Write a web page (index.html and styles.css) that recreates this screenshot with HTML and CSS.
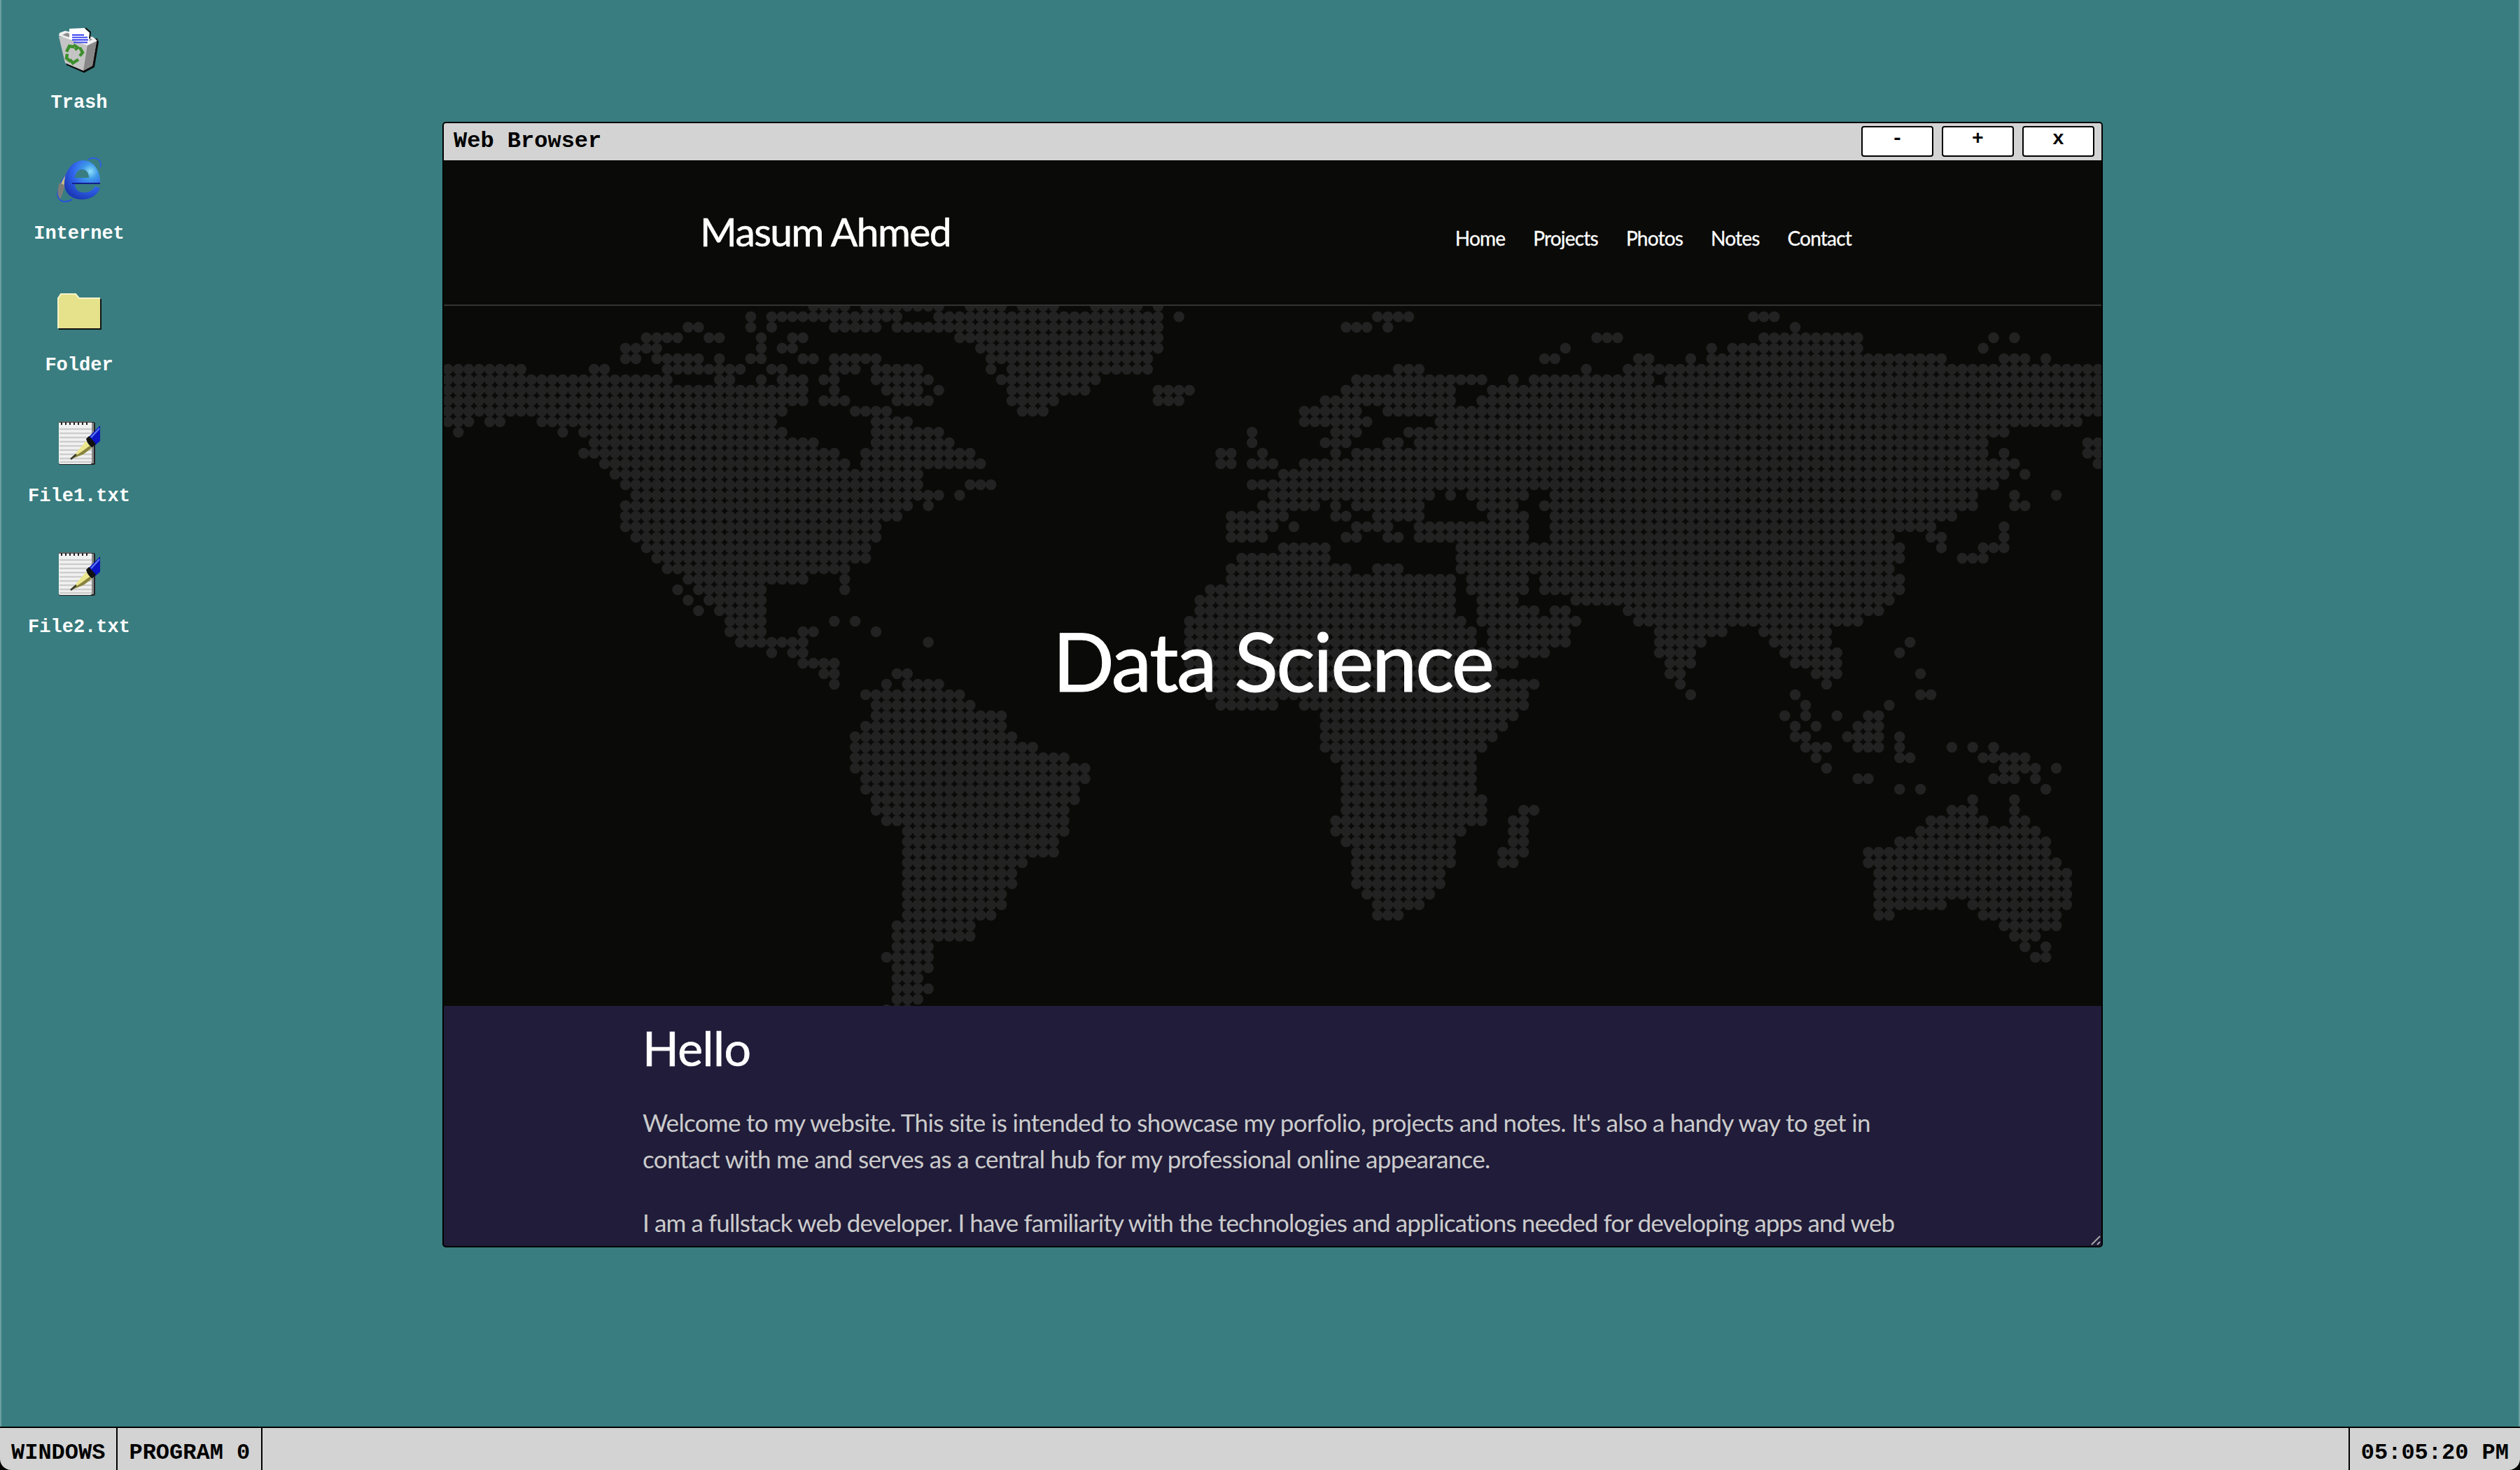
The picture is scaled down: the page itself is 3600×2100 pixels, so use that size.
FILE: index.html
```html
<!DOCTYPE html>
<html lang="en">
<head>
<meta charset="utf-8">
<title>Desktop</title>
<link rel="stylesheet" href="styles.css">
</head>
<body>
<svg class="defs" width="0" height="0" aria-hidden="true">
  <defs>
    <radialGradient id="ieGlow" gradientUnits="userSpaceOnUse" cx="48" cy="20" r="42">
      <stop offset="0" stop-color="#8fe0f8"/>
      <stop offset="0.25" stop-color="#3f9aea"/>
      <stop offset="0.6" stop-color="#2f62ea"/>
      <stop offset="1" stop-color="#1c3ab8"/>
    </radialGradient>
    <symbol id="noteIcon" viewBox="0 0 64 64">
      <path d="M50 3 H53 Q55 3 55 5 V62 Q55 64 53 64 H6 Q3 64 3 62 Z" fill="#222"/>
      <rect x="3" y="2" width="47" height="61" rx="2" fill="#f2f2f2"/>
      <rect x="50" y="4" width="3" height="58" fill="#8a8a8a"/>
      <path class="note-lines" d="M4 13H50M4 19H50M4 25H50M4 31H50M4 37H50M4 43H50M4 49H50M4 55H50M4 60H50"/>
      <path class="note-rings" d="M3 3H50"/>
      <path class="note-holes" d="M7 3v4M13 3v4M19 3v4M25 3v4M31 3v4M37 3v4M43 3v4"/>
      <path d="M46 24 L62 8 L62 30 L55 36 Z" fill="#0a14c4"/>
      <path d="M49 25 L61 12" stroke="#5f7cf0" stroke-width="2"/>
      <path d="M42 27 L46 23 L56 34 L51 39 L46 38 Z" fill="#111"/>
      <path d="M20 56 L42 30 L50 40 L38 49 Z" fill="#ece68e"/>
      <path d="M20 56 L38 49 L50 40 L47 37 L36 45 Z" fill="#8a8440"/>
      <path d="M20 56 L28 49" stroke="#3a3a2a" stroke-width="2.6"/>
    </symbol>
  </defs>
</svg>

<main class="desktop">
  <ul class="icons">
    <li class="icon">
      <svg class="glyph" viewBox="0 0 64 64">
        <path d="M4 16 L14 55 L39 66 L54 58 L60 22 L58 17 Z" fill="#0c0c0c"/>
        <path d="M3 14 L12 52 L38 63 L51 56 L57 21 Z" fill="#c4c4c4"/>
        <path d="M38 63 L51 56 L57 21 L44 26 Z" fill="#878787"/>
        <path d="M3 13 L4 9 L12 6 L52 15 L58 20 L44 27 Z" fill="#efefef"/>
        <path d="M8 12 L14 9 L51 18 L43 23 Z" fill="#8c8c8c"/>
        <path d="M18 3 L40 2 L48 10 L46 24 L18 18 Z" fill="#fff"/>
        <path d="M41 2 L48 8 L47 17" fill="none" stroke="#111" stroke-width="2"/>
        <path class="trash-lines" d="M22 12H39M22 15.500H44M22 19H45M24 22.500H44"/>
        <g class="recycle">
          <path d="M14 36 L18 28 L25 29"/>
          <path d="M24 26 L30 30 L26 33"/>
          <path d="M33 30 L37 37 L33 42"/>
          <path d="M31 47 L23 52 L19 47"/>
          <path d="M15 39 L14 45 L20 50"/>
        </g>
      </svg>
      <span class="label">Trash</span>
    </li>
    <li class="icon">
      <svg class="glyph" viewBox="0 0 64 64">
        <path d="M39 6 C22 12 6 30 2 48 C0 56 4 63 12 63 C16 63 20 61 22 60" fill="none" stroke="#2a50d8" stroke-width="2.2"/>
        <path d="M45 3 C52 -1 63 0 63 11 L62 14" fill="none" stroke="#2f5fe0" stroke-width="2"/>
        <path d="M5 42 C8 28 20 14 31 11 C24 18 14 30 10 40 Z" fill="#c9bd80"/>
        <path d="M4 36 C1 44 0 54 5 60 L8 52 L12 40 Z" fill="#7d7d78"/>
        <path class="ie-e" fill-rule="evenodd" d="M38 4 C52 4 63 18 62 37 L26 37 C26 46 32 50 39 50 C46 50 52 47 55 41 L62 44 C57 55 47 60 36 60 C20 60 10 50 11 35 C12 18 24 4 38 4 Z M26 29 L46 29 C46 21 42 17 36 17 C31 17 27 22 26 29 Z"/>
        <path d="M22 37 H62" stroke="#14208c" stroke-width="2"/>
      </svg>
      <span class="label">Internet</span>
    </li>
    <li class="icon">
      <svg class="glyph" viewBox="0 0 64 64">
        <path d="M3 14 L7 8 L28 8 L33 14 L64 14 L64 58 L3 58 Z" fill="#111"/>
        <path d="M2 13 L6 7 L27 7 L32 13 L62 13 L62 56 L2 56 Z" fill="#e6e28c"/>
        <path d="M2 56 L2 13 L6 7 L27 7 L32 13 L62 13" fill="none" stroke="#f6f4c8" stroke-width="2"/>
      </svg>
      <span class="label">Folder</span>
    </li>
    <li class="icon">
      <svg class="glyph"><use href="#noteIcon"/></svg>
      <span class="label">File1.txt</span>
    </li>
    <li class="icon">
      <svg class="glyph"><use href="#noteIcon"/></svg>
      <span class="label">File2.txt</span>
    </li>
  </ul>

  <section class="window">
    <header class="titlebar">
      <span class="title">Web Browser</span>
      <div class="controls">
        <button class="ctrl">-</button>
        <button class="ctrl">+</button>
        <button class="ctrl">x</button>
      </div>
    </header>
    <div class="page">
      <header class="site-head">
        <span class="logo">Masum Ahmed</span>
        <nav class="nav">
          <a>Home</a><a>Projects</a><a>Photos</a><a>Notes</a><a>Contact</a>
        </nav>
      </header>
      <section class="hero">
        <svg class="map" viewBox="-1.39 -1.033 158.71 66.67" preserveAspectRatio="none" aria-hidden="true">
          <path d="M34 -1H37.01M39 -1H46.01M49 -1H52.01M54 -1H57.01M61 -1H65.01M67 -1H67.01
M28 0H28.01M30 0H42.01M46 0H67.01M69 0H69.01M88 0H91.01M124 0H126.01
M22 1H23.01M28 1H28.01M30 1H30.01M36 1H40.01M42 1H67.01M85 1H87.01M89 1H89.01M128 1H128.01
M18 2H21.01M24 2H25.01M29 2H29.01M32 2H33.01M48 2H67.01M109 2H111.01M125 2H134.01M147 2H147.01M149 2H149.01
M16 3H19.01M29 3H29.01M31 3H32.01M50 3H67.01M106 3H106.01M120 3H120.01M122 3H134.01M146 3H146.01
M16 4H17.01M19 4H23.01M25 4H25.01M28 4H29.01M33 4H34.01M36 4H40.01M51 4H66.01M104 4H105.01M113 4H114.01M118 4H118.01M120 4H142.01M148 4H150.01M152 4H152.01
M-1 5H6.01M13 5H14.01M20 5H27.01M30 5H31.01M36 5H38.01M40 5H44.01M51 5H51.01M53 5H66.01M90 5H92.01M108 5H108.01M112 5H157.01
M-1 6H20.01M25 6H26.01M29 6H29.01M31 6H33.01M35 6H36.01M40 6H45.01M52 6H61.01M86 6H98.01M101 6H101.01M103 6H114.01M116 6H157.01
M-1 7H33.01M36 7H36.01M41 7H44.01M46 7H46.01M53 7H60.01M67 7H70.01M85 7H95.01M99 7H157.01
M-1 8H33.01M35 8H37.01M42 8H45.01M53 8H57.01M67 8H69.01M83 8H95.01M98 8H157.01
M-1 9H31.01M38 9H41.01M54 9H56.01M81 9H86.01M89 9H157.01
M-1 10H1.01M3 10H4.01M8 10H30.01M40 10H43.01M81 10H87.01M94 10H155.01
M0 11H0.01M10 11H10.01M12 11H31.01M40 11H46.01M76 11H76.01M84 11H86.01M91 11H148.01
M13 12H34.01M40 12H47.01M76 12H76.01M83 12H85.01M89 12H90.01M92 12H146.01M156 12H157.01
M12 13H36.01M39 13H49.01M73 13H74.01M77 13H77.01M84 13H84.01M86 13H146.01M148 13H148.01M156 13H157.01
M14 14H37.01M39 14H50.01M73 14H74.01M76 14H78.01M81 14H149.01M157 14H157.01
M15 15H44.01M79 15H148.01M150 15H150.01
M16 16H44.01M49 16H51.01M76 16H147.01
M17 17H46.01M48 17H48.01M78 17H92.01M93 17H93.01M95 17H95.01M97 17H102.01M105 17H145.01M149 17H149.01M153 17H153.01
M16 18H43.01M45 18H45.01M77 18H82.01M84 18H84.01M86 18H92.01M98 18H101.01M104 18H145.01M149 18H150.01
M16 19H42.01M74 19H79.01M84 19H85.01M88 19H92.01M99 19H102.01M105 19H143.01
M16 20H40.01M74 20H78.01M80 20H80.01M86 20H89.01M92 20H102.01M105 20H141.01M148 20H148.01
M17 21H40.01M74 21H77.01M85 21H86.01M89 21H90.01M92 21H102.01M105 21H137.01M141 21H142.01M148 21H148.01
M18 22H39.01M79 22H83.01M96 22H138.01M142 22H142.01M146 22H148.01
M19 23H39.01M75 23H83.01M96 23H138.01M144 23H146.01
M20 24H37.01M74 24H85.01M88 24H90.01M96 24H137.01
M22 25H33.01M37 25H37.01M74 25H95.01M97 25H102.01M104 25H138.01
M21 26H21.01M23 26H29.01M37 26H37.01M72 26H95.01M97 26H102.01M104 26H138.01
M22 27H22.01M24 27H29.01M71 27H95.01M98 27H101.01M107 27H137.01
M23 28H23.01M25 28H29.01M71 28H95.01M98 28H103.01M105 28H106.01M112 28H136.01
M26 29H29.01M36 29H36.01M38 29H38.01M70 29H96.01M98 29H107.01M113 29H134.01
M26 30H29.01M33 30H34.01M40 30H40.01M70 30H97.01M99 30H106.01M115 30H121.01M125 30H131.01
M27 31H33.01M45 31H45.01M70 31H97.01M99 31H106.01M115 31H119.01M126 31H131.01M139 31H139.01
M30 32H30.01M32 32H33.01M70 32H104.01M115 32H118.01M127 32H132.01M138 32H138.01
M33 33H36.01M70 33H101.01M116 33H118.01M128 33H132.01
M35 34H36.01M42 34H43.01M70 34H99.01M116 34H117.01M130 34H132.01M140 34H140.01
M36 35H36.01M41 35H41.01M43 35H46.01M71 35H103.01M117 35H117.01M131 35H131.01
M39 36H48.01M72 36H102.01M118 36H118.01M128 36H128.01M140 36H141.01
M40 37H49.01M73 37H78.01M81 37H102.01M129 37H129.01M137 37H137.01
M40 38H52.01M83 38H101.01M127 38H127.01M129 38H129.01M132 38H132.01M135 38H136.01
M39 39H52.01M83 39H100.01M128 39H128.01M130 39H130.01M134 39H136.01
M38 40H53.01M83 40H99.01M128 40H129.01M133 40H136.01M138 40H138.01
M38 41H55.01M83 41H98.01M129 41H131.01M134 41H136.01M138 41H138.01M143 41H143.01M145 41H145.01M147 41H147.01
M38 42H58.01M84 42H97.01M130 42H130.01M138 42H139.01M146 42H150.01
M38 43H60.01M85 43H97.01M131 43H131.01M148 43H151.01M153 43H153.01
M39 44H60.01M85 44H97.01M134 44H135.01M147 44H149.01M151 44H151.01
M39 45H59.01M85 45H97.01M138 45H138.01M140 45H140.01M152 45H152.01
M40 46H59.01M85 46H98.01M145 46H145.01M149 46H149.01
M40 47H58.01M85 47H98.01M102 47H103.01M143 47H145.01M149 47H149.01
M41 48H58.01M84 48H98.01M101 48H102.01M141 48H146.01M149 48H150.01
M43 49H58.01M84 49H96.01M101 49H102.01M140 49H151.01
M43 50H57.01M85 50H95.01M101 50H102.01M138 50H152.01
M43 51H57.01M86 51H95.01M100 51H102.01M135 51H152.01
M43 52H54.01M86 52H95.01M100 52H101.01M135 52H153.01
M43 53H53.01M86 53H94.01M136 53H154.01
M43 54H53.01M86 54H94.01M136 54H154.01
M43 55H52.01M87 55H93.01M136 55H154.01
M43 56H52.01M88 56H92.01M136 56H142.01M145 56H154.01
M43 57H51.01M88 57H90.01M136 57H137.01M146 57H153.01
M42 58H49.01M148 58H153.01
M42 59H49.01M149 59H151.01
M42 60H45.01M150 60H150.01M152 60H152.01
M41 61H45.01M151 61H152.01
M42 62H45.01M42 63H44.01M42 64H45.01M42 65H44.01M41 66H43.01"/>
        </svg>
        <h1 class="hero-title">Data Science</h1>
      </section>
      <section class="intro">
        <h2 class="intro-title">Hello</h2>
        <p class="intro-text intro-lead">Welcome to my website. This site is intended to showcase my porfolio, projects and notes. It's also a handy way to get in contact with me and serves as a central hub for my professional online appearance.</p>
        <p class="intro-text">I am a fullstack web developer. I have familiarity with the technologies and applications needed for developing apps and web</p>
      </section>
    </div>
    <svg class="resizer" viewBox="0 0 16 16" aria-hidden="true">
      <path d="M2 14 L14 2 M10 14 L14 10"/>
    </svg>
  </section>
</main>

<footer class="taskbar">
  <span class="task">WINDOWS</span>
  <span class="task">PROGRAM 0</span>
  <span class="spacer"></span>
  <span class="clock">05:05:20 PM</span>
</footer>
</body>
</html>
```
FILE: styles.css
```css
* { box-sizing: border-box; }
html, body { margin: 0; height: 100%; }
body {
  display: flex;
  flex-direction: column;
  height: 100vh;
  background: #000;
  overflow: hidden;
  font-family: "Liberation Mono", monospace;
  font-weight: 700;
}
.defs { position: absolute; }

.desktop {
  flex: 1;
  position: relative;
  background: #397d80;
  border-left: 2px solid #6a9fa1;
  border-right: 2px solid #6a9fa1;
}
.icons {
  list-style: none;
  margin: 0;
  padding: 38px 0 0;
  width: 222px;
  display: flex;
  flex-direction: column;
}
.icon {
  height: 187.25px;
  display: flex;
  flex-direction: column;
  align-items: center;
}
.glyph { width: 64px; height: 64px; overflow: visible; display: block; }
.label {
  margin-top: 30px;
  color: #fff;
  font-size: 27px;
  line-height: 30px;
}
.note-lines { stroke: #cdcdcd; stroke-width: 2.6; fill: none; }
.note-rings { stroke: #666; stroke-width: 2; fill: none; }
.note-holes { stroke: #222; stroke-width: 2; fill: none; }
.trash-lines { stroke: #3c46f0; stroke-width: 2.2; fill: none; }
.recycle path { stroke: #3c8f2c; stroke-width: 4.4; fill: none; }
.ie-e { fill: url(#ieGlow); }

.window {
  position: absolute;
  left: 630px;
  top: 174px;
  width: 2372px;
  height: 1608px;
  border: 2px solid #000;
  border-radius: 5px;
  display: flex;
  flex-direction: column;
  overflow: hidden;
  background: #0a0a08;
}
.titlebar {
  height: 53px;
  flex: none;
  background: #d3d3d3;
  display: flex;
  align-items: flex-start;
  justify-content: space-between;
  padding: 4px 10px 0 14px;
}
.title { font-size: 32px; line-height: 36px; padding-top: 4px; color: #000; }
.controls { display: flex; gap: 12px; }
.ctrl {
  width: 103px;
  height: 44px;
  background: #fff;
  border: 2px solid #000;
  border-radius: 4px;
  padding: 0 0 6px;
  font: 700 28px/34px "Liberation Mono", monospace;
  color: #000;
}

.page {
  flex: 1;
  min-height: 0;
  display: flex;
  flex-direction: column;
  overflow: hidden;
  font-family: Lato, "Noto Sans", sans-serif;
  font-weight: 400;
}
.site-head {
  height: 208px;
  flex: none;
  border-bottom: 2px solid #333;
  display: flex;
  align-items: flex-start;
  justify-content: space-between;
  padding: 0 357px 0 366px;
}
.logo {
  color: #fff;
  font-size: 57px;
  line-height: 70px;
  margin-top: 66px;
  letter-spacing: -1.6px;
  -webkit-text-stroke: 0.6px #fff;
}
.nav { display: flex; gap: 40px; margin-top: 93px; }
.nav a {
  color: #fff;
  font-size: 28px;
  line-height: 36px;
  letter-spacing: -0.8px;
  -webkit-text-stroke: 0.3px #fff;
}

.hero {
  height: 1000px;
  flex: none;
  display: grid;
  place-items: center;
  overflow: hidden;
}
.map {
  grid-area: 1 / 1;
  width: 100%;
  height: 100%;
  display: block;
}
.map path {
  fill: none;
  stroke: #222;
  stroke-width: 1.04;
  stroke-linecap: round;
  stroke-dasharray: 0.001 0.999;
}
.hero-title {
  grid-area: 1 / 1;
  margin: 14px 0 0;
  color: #fff;
  font-size: 116px;
  font-weight: 400;
  line-height: 130px;
  position: relative;
  letter-spacing: -2.6px;
  -webkit-text-stroke: 1px #fff;
}

.intro {
  flex: 1;
  background: #201c39;
  padding: 19px 272px 0 284px;
  overflow: hidden;
}
.intro-title {
  margin: 0;
  color: #fff;
  font-size: 68px;
  font-weight: 400;
  line-height: 82px;
  letter-spacing: -0.6px;
  -webkit-text-stroke: 0.7px #fff;
}
.intro-text {
  margin: 39px 0 0;
  color: #cbcbcb;
  font-size: 35px;
  line-height: 52px;
  letter-spacing: -0.9px;
}
.intro-lead { letter-spacing: -0.68px; }

.resizer {
  position: absolute;
  right: 0;
  bottom: 0;
  width: 16px;
  height: 16px;
}
.resizer path { stroke: #aaa; stroke-width: 2; fill: none; }

.taskbar {
  height: 62px;
  flex: none;
  background: #d3d3d3;
  border-top: 2px solid #000;
  border-radius: 0 0 16px 16px;
  display: flex;
  font-size: 32px;
  line-height: 60px;
  color: #000;
}
.task { padding: 6px 16px 0; border-right: 2px solid #000; }
.spacer { flex: 1; }
.clock { padding: 6px 16px 0; border-left: 2px solid #000; }
```
